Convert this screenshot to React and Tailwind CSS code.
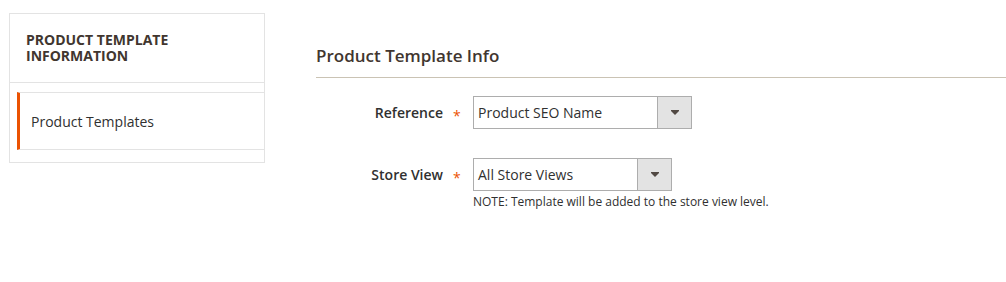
import React from 'react';

const Arrow = () => (
  <svg width="8" height="5" viewBox="0 0 8 5" className="block">
    <polygon points="0,0 8,0 8,1 4,5 0,1" fill="#514943" />
  </svg>
);

const Select = ({ value, width }) => (
  <div className={`${width} h-[33px] border border-[#adadad] bg-white flex`}>
    <div className="flex-1 flex items-center pl-[4px] text-[14px] text-[#303030]">{value}</div>
    <div className="w-[34px] border-l border-[#adadad] bg-[#e3e3e3] flex items-center justify-center">
      <Arrow />
    </div>
  </div>
);

const Field = ({ label, children }) => (
  <div className="flex items-start">
    <div className="w-[127px] h-[33px] flex items-center justify-end text-[14px] font-semibold text-[#303030]">
      {label}
    </div>
    <div className="w-[30px] h-[33px] flex items-center pl-[10px]">
      <span className="relative top-[3px] text-[14px] text-[#eb5202]">*</span>
    </div>
    <div>{children}</div>
  </div>
);

export default function App() {
  return (
    <div className="min-h-[282px] bg-white font-['Open_Sans',sans-serif] flex pt-[13px] pl-[9px]">
      <aside className="w-[256px] shrink-0 self-start border border-[#e3e3e3]">
        <div className="border-b border-[#e3e3e3] pl-[16px] pr-[30px] py-[18px]">
          <h2 className="text-[14px] leading-[16px] font-bold uppercase text-[#41362f]">
            Product Template Information
          </h2>
        </div>
        <div className="pt-[9px] pb-[12px] pl-[7px]">
          <div className="h-[58px] border-l-[3px] border-l-[#eb5202] border-y border-y-[#e3e3e3] flex items-center pl-[11px] text-[14px] text-[#303030]">
            Product Templates
          </div>
        </div>
      </aside>

      <main className="flex-1 ml-[51px] pt-[31px]">
        <h3 className="text-[17px] leading-[23px] font-semibold text-[#41362f] pb-[10px] border-b border-[#cac3b4]">
          Product Template Info
        </h3>
        <div className="mt-[18px]">
          <Field label="Reference">
            <Select value="Product SEO Name" width="w-[219px]" />
          </Field>
          <div className="mt-[29px]">
            <Field label="Store View">
              <Select value="All Store Views" width="w-[199px]" />
              <p className="mt-[2px] text-[12px] leading-[18px] text-[#303030]">
                NOTE: Template will be added to the store view level.
              </p>
            </Field>
          </div>
        </div>
      </main>
    </div>
  );
}
